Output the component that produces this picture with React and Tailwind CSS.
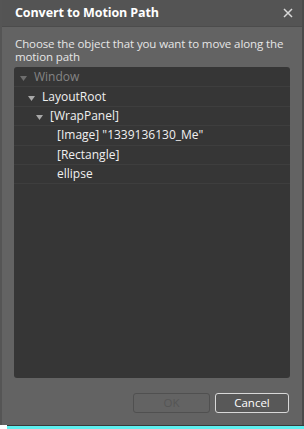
import React from 'react';

const rows = [
  { label: 'Window', depth: 0, arrow: true, muted: true },
  { label: 'LayoutRoot', depth: 1, arrow: true },
  { label: '[WrapPanel]', depth: 2, arrow: true },
  { label: '[Image] "1339136130_Me"', depth: 3 },
  { label: '[Rectangle]', depth: 3 },
  { label: 'ellipse', depth: 3 },
];

const pad = ['pl-[6px]', 'pl-[14px]', 'pl-[22px]', 'pl-[43px]'];

const Arrow = ({ muted }) => (
  <svg width="7" height="5" viewBox="0 0 7 5" className="mr-[7px] mt-[3px] shrink-0">
    <path d="M0 0 L7 0 L3.5 5 Z" fill={muted ? '#6e6e6e' : '#a8a8a8'} />
  </svg>
);

export default function App() {
  return (
    <div
      className="w-[304px] h-[429px] bg-white flex flex-col overflow-hidden"
      style={{ fontFamily: '"Open Sans", "Noto Sans", sans-serif' }}
    >
      <div className="flex h-[425px] bg-[#4a4a4a]">
        <div className="w-[302px] flex flex-col border-l-2 border-[#555555]">
          {/* Title bar */}
          <div className="h-[27px] bg-[#545454] border-b border-[#4c4c4c] flex items-center justify-between pl-[13px] pr-[9px]">
            <span className="text-[12.5px] font-bold text-white tracking-[-0.1px]">Convert to Motion Path</span>
            <svg width="10" height="10" viewBox="0 0 10 10">
              <path d="M1 1 L9 9 M9 1 L1 9" stroke="#d8d8d8" strokeWidth="1.5" />
            </svg>
          </div>

          {/* Body */}
          <div className="flex-1 bg-[#636363] flex flex-col pl-[12px] pr-[12px]">
            <p className="mt-[10px] text-[11.5px] leading-[13px] text-[#e6e6e6] pl-[1px] tracking-[-0.1px]">
              Choose the object that you want to move along the motion path
            </p>
            <div className="mt-[4px] h-[311px] bg-[#363636] rounded-[3px] flex flex-col pt-[1px]">
              {rows.map((r, i) => (
                <div
                  key={i}
                  className={`h-[19.4px] flex items-center border-b border-[#3e3e3e] ${pad[r.depth]} text-[12px] ${r.muted ? 'text-[#858585]' : 'text-[#f0f0f0]'}`}
                >
                  {r.arrow && <Arrow muted={r.muted} />}
                  <span>{r.label}</span>
                </div>
              ))}
            </div>

            {/* Buttons */}
            <div className="mt-[15px] flex justify-end gap-[5px] pr-[1px]">
              <button className="w-[77px] h-[20px] rounded-[3px] border border-[#505050] text-[11.5px] text-[#555555] flex items-center justify-center">
                OK
              </button>
              <button className="w-[74px] h-[20px] rounded-[3px] border border-[#d8d8d8] bg-[#585858] text-[11.5px] text-white flex items-center justify-center">
                Cancel
              </button>
            </div>
          </div>
        </div>
      </div>
      <div className="flex h-[4px]">
        <div className="w-[7px] bg-white" />
        <div className="flex-1 flex flex-col">
          <div className="h-[1px] bg-[#3a3a3a]" />
          <div className="flex-1 bg-[#5ef0f0]" />
        </div>
      </div>
    </div>
  );
}
